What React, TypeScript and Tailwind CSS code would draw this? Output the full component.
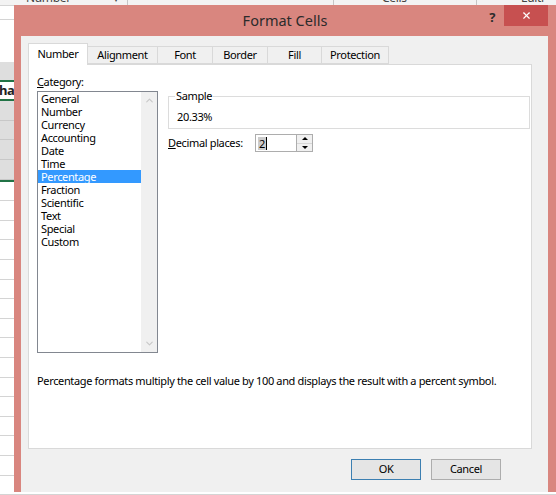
import { ChevronUp, ChevronDown, X } from 'lucide-react'

const categories = [
  'General',
  'Number',
  'Currency',
  'Accounting',
  'Date',
  'Time',
  'Percentage',
  'Fraction',
  'Scientific',
  'Text',
  'Special',
  'Custom',
]

const tabs = ['Number', 'Alignment', 'Font', 'Border', 'Fill', 'Protection']
const tabWidths = ['w-[60px]', 'w-[70px]', 'w-[55px]', 'w-[55px]', 'w-[54px]', 'w-[67px]']

function Sheet() {
  return (
    <div className="flex h-full flex-col">
      <div className="flex h-[6px] overflow-hidden border-b border-[#d4d4d4] bg-[#f3f3f3] text-[12px] leading-[14px] text-[#444]">
        <div className="-mt-[9px] flex w-[128px] border-r border-[#c6c6c6] pl-[26px]">
          <span>Number</span>
          <span className="ml-auto pr-[8px]">▾</span>
        </div>
        <div className="-mt-[9px] w-[195px] border-r border-[#c6c6c6] pl-[205px]" />
        <div className="-mt-[9px] w-[143px] border-r border-[#c6c6c6] pl-[48px]">Cells</div>
        <div className="-mt-[9px] pl-[44px]">Editi</div>
      </div>
      <div className="h-[14px] border-b border-[#d4d4d4]" />
      <div className="h-[43px]" />
      <div className="h-[19px] bg-[#dedede]" />
      <div className="flex h-[21px] items-center border-y-2 border-[#217346] text-[13px] font-bold text-[#222]">
        <span className="-ml-[1px]">ha</span>
      </div>
      {[0, 1, 2, 3].map(i => (
        <div key={i} className="h-[20px] border-b border-[#c8c8c8] bg-[#dedede]" />
      ))}
      <div className="h-[2px] bg-[#217346]" />
      {Array.from({ length: 16 }).map((_, i) => (
        <div key={i} className="h-[20px] border-b border-[#d4d4d4]" />
      ))}
    </div>
  )
}

export default function App() {
  return (
    <div className="relative h-[495px] w-[556px] overflow-hidden bg-white font-['Noto_Sans',sans-serif] text-[11px] tracking-[-0.35px] text-black">
      <Sheet />

      <div className="absolute left-[14px] top-[5px] flex h-[487px] w-[542px] flex-col bg-[#d9867f]">
        <div className="relative flex h-[31px] items-center justify-center">
          <span className="pt-[1px] text-[14.5px] tracking-normal text-[#2b2b2b]">Format Cells</span>
          <div className="absolute right-[8px] top-0 flex items-start">
            <span className="mr-[9px] mt-[3px] text-[13px] font-bold text-[#2b2b2b]">?</span>
            <div className="flex h-[21px] w-[44px] items-center justify-center bg-[#c75050] text-white">
              <X size={11} strokeWidth={2.5} />
            </div>
          </div>
        </div>

        <div className="ml-[7px] mr-[8px] flex flex-1 flex-col bg-[#f0f0f0] px-[7px] pt-[7px]">
          <div className="flex h-[21px] items-end">
            {tabs.map((t, i) => (
              <div
                key={t}
                className={
                  i === 0
                    ? `relative z-10 -mb-px flex h-[22px] ${tabWidths[i]} items-center justify-center border border-b-0 border-[#d9d9d9] bg-white`
                    : `flex h-[18px] ${tabWidths[i]} items-center justify-center border border-l-0 border-[#d9d9d9] bg-[#f0f0f0]`
                }
              >
                {t}
              </div>
            ))}
          </div>

          <div className="mr-[9px] flex h-[385px] flex-col border border-[#d9d9d9] bg-white pl-[8px] pt-[9px]">
            <div className="flex gap-[10px]">
              <div className="flex flex-col">
                <div className="leading-[16px]">
                  <span className="underline">C</span>ategory:
                </div>
                <div className="mt-[1px] flex h-[262px] w-[121px] border border-[#828790]">
                  <div className="flex flex-1 flex-col">
                    {categories.map(c => (
                      <div
                        key={c}
                        className={`h-[13px] pl-[3px] leading-[13px] ${
                          c === 'Percentage' ? 'bg-[#3399ff] text-white' : ''
                        }`}
                      >
                        {c}
                      </div>
                    ))}
                  </div>
                  <div className="flex w-[16px] flex-col items-center justify-between bg-[#f0f0f0] py-[3px] text-[#c8c8c8]">
                    <ChevronUp size={11} strokeWidth={2.5} />
                    <ChevronDown size={11} strokeWidth={2.5} />
                  </div>
                </div>
              </div>

              <div className="flex w-[362px] flex-col pt-[15px]">
                <fieldset className="h-[40px] border border-[#dcdcdc] px-[6px]">
                  <legend className="px-[1px] leading-[14px]">Sample</legend>
                  <div className="mt-[7px] pl-[2px] leading-[14px]">20.33%</div>
                </fieldset>
                <div className="mt-[5px] flex items-center">
                  <span className="w-[87px] whitespace-nowrap">
                    <span className="underline">D</span>ecimal places:
                  </span>
                  <div className="flex h-[18px] w-[58px] items-center border border-[#adadad] bg-white">
                    <div className="flex flex-1 items-center pl-[2px]">
                      <span className="bg-[#cccccc] px-[1px] leading-[13px]">2</span>
                      <span className="h-[13px] w-px bg-black" />
                    </div>
                    <div className="flex h-full w-[16px] flex-col border-l border-[#adadad]">
                      <div className="flex flex-1 items-center justify-center border-b border-[#d6d6d6] bg-[#f0f0f0]">
                        <span className="h-0 w-0 border-x-[3px] border-b-[3px] border-x-transparent border-b-black" />
                      </div>
                      <div className="flex flex-1 items-center justify-center bg-[#f0f0f0]">
                        <span className="h-0 w-0 border-x-[3px] border-t-[3px] border-x-transparent border-t-black" />
                      </div>
                    </div>
                  </div>
                </div>
              </div>
            </div>

            <p className="mt-[20px] whitespace-nowrap leading-[16px]">
              Percentage formats multiply the cell value by 100 and displays the result with a percent symbol.
            </p>
          </div>

          <div className="mt-[10px] flex justify-end gap-[10px] pr-[40px]">
            <button className="h-[21px] w-[70px] border border-[#3c7fb1] bg-[#e5e5e5]">OK</button>
            <button className="h-[21px] w-[70px] border border-[#adadad] bg-[#e5e5e5]">Cancel</button>
          </div>
        </div>
      </div>
    </div>
  )
}
